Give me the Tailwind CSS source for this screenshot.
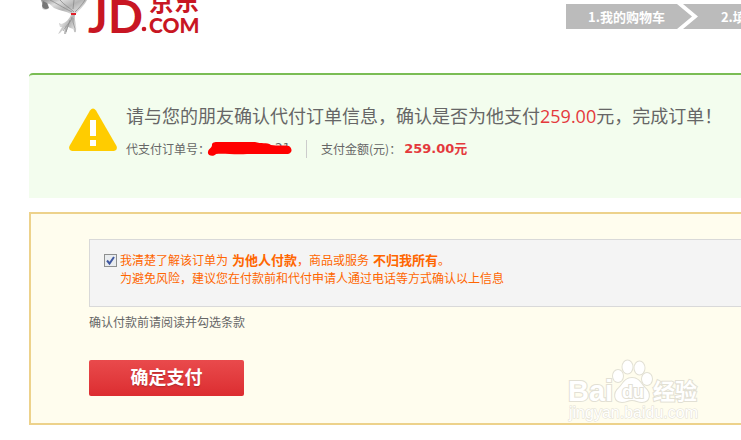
<!DOCTYPE html>
<html lang="zh-CN">
<head>
  <meta charset="UTF-8" />
  <meta name="viewport" content="width=device-width, initial-scale=1.0" />
  <title>确认代付 - 京东</title>
  <script src="https://cdn.jsdelivr.net/npm/@tailwindcss/browser@4"></script>
</head>
<body class="bg-white text-[#666666] text-xs overflow-x-hidden font-['Noto_Sans_CJK_SC',sans-serif]">
  <header class="flex items-start justify-between h-[73px] pl-10">
    <a href="#" aria-label="京东 JD.COM">
      <svg class="block" width="164" height="36" viewBox="40 0 164 36">
        <defs>
          <linearGradient id="silver" x1="0" y1="0" x2="1" y2="0.6">
            <stop offset="0" stop-color="#8f8f8f" />
            <stop offset="0.35" stop-color="#dcdcdc" />
            <stop offset="0.65" stop-color="#b4b4b4" />
            <stop offset="1" stop-color="#e2e2e2" />
          </linearGradient>
        </defs>
        <!-- dog -->
        <path d="M41 0 L87 0 C85 5 79 10 76 14 L71 14 C66 11 60 11 54 8 C51 6 50 3 48 4 C49 7 49 9 46 10 C43 10 41 8 43 6 Z" fill="url(#silver)" />
        <path d="M42 6 C43 9 46 10 49 8 L47 3 L43 1 Z" fill="#777" />
        <path d="M50 0 C56 3 62 7 72 12 M60 0 C64 5 70 8 74 12 M74 0 L73 9 M85 0 C82 5 78 9 75 12" fill="none" stroke="#8a8a8a" stroke-width="0.8" />
        <path d="M71 13 L76 13 L76 15 L71 15 Z" fill="#e0202a" />
        <path d="M71 15 L75 15 C74 20 77 24 76 31 L75 33 L73 29 L68 27 L66 34 L64 34 L65 27 L60 33 L58 34 L62 27 L60 27 L59 23 L61 24 C66 23 69 19 71 15 Z" fill="url(#silver)" />
        <path d="M72 17 C71 23 66 25 63 31 M73 18 C72 24 76 27 75 32 M70 20 L66 32" fill="none" stroke="#888" stroke-width="0.7" />
        <!-- wordmark -->
        <g fill="#c81623">
          <text x="88" y="33" font-family="Lato" font-size="46" font-weight="700">J</text>
          <text x="108" y="33" font-family="Lato" font-size="46" font-weight="700">D</text>
          <circle cx="144" cy="29" r="2.3" />
          <text x="149" y="33" font-family="Lato" font-size="21" font-weight="900">COM</text>
          <text x="149" y="11" font-family="Noto Sans CJK SC" font-size="25" font-weight="700">京东</text>
        </g>
      </svg>
    </a>
    <ol class="flex items-center h-[25px] w-[175px] mt-1 bg-[#bbbbbb] text-white text-[13px] font-bold whitespace-nowrap overflow-hidden">
      <li class="shrink-0 pl-[22px]">1.我的购物车</li>
      <li class="shrink-0 pl-3">
        <svg class="block" width="24" height="25" viewBox="0 0 24 25">
          <path d="M0 0 H6 L21 12.500 L6 25 H0 L15 12.500 Z" fill="#fff" />
        </svg>
      </li>
      <li class="shrink-0 pl-5">2.填写核对订单信息</li>
    </ol>
  </header>

  <main class="ml-[29px]">
    <section class="flex h-[125px] pl-10 border-t-2 border-[#7abd54] rounded-tl-sm bg-[#f3fdee]">
      <svg class="shrink-0 mt-[33px]" width="48" height="43" viewBox="0 0 48 43">
        <path d="M21 2.500 Q24 -1.500 27 2.500 L47.500 38 Q49 42 45 43 H3 Q-1 42 0.500 38 Z" fill="#ffcc00" />
        <path d="M21 12 H27 V28 H21 Z M21 32 H27 V38 H21 Z" fill="#fff" />
      </svg>
      <div class="pl-[9px] pt-6 whitespace-nowrap">
        <h1 class="text-lg leading-[32px]">请与您的朋友确认代付订单信息，确认是否为他支付<span class="text-[#e4393c] font-['Open_Sans','Noto_Sans_CJK_SC',sans-serif]">259.00</span>元，完成订单！</h1>
        <div class="flex items-center h-[34px]">
          <span>代支付订单号：</span>
          <svg class="-ml-[3px]" width="86" height="18" viewBox="0 0 86 18">
            <text x="68" y="12" font-family="DejaVu Sans" font-size="12" fill="#666">21</text>
            <path d="M5 5 C5 2 8 2 11 2 L48 2 C54 4 60 2 64 5 C70 6 78 5 82 6 C86 9 85 13 81 14 L40 14 C28 15 16 13 9 14 C7 17 0 16 1 12 C1 9 5 8 5 5 Z" fill="#f00" />
          </svg>
          <span class="ml-[13px] pl-[14px] h-[18px] leading-[18px] border-l border-[#cccccc]">支付金额(元)：</span>
          <strong class="ml-[3px] text-[13px] text-[#e4393c] font-['DejaVu_Sans','Noto_Sans_CJK_SC',sans-serif]">259.00元</strong>
        </div>
      </div>
    </section>

    <form class="relative mt-[14px] pl-[58px] pt-[25px] pb-[27px] border-2 border-r-0 border-[#edd28b] bg-[#fffdee]">
      <div class="flex h-[68px] pl-[14px] pt-[11px] border border-r-0 border-[#d9d9d9] bg-[#f4f4f4] text-[#ff6600]">
        <span class="grid w-[13px] h-[13px] mt-[3px] mr-[3px]">
          <input type="checkbox" id="agree" checked class="peer appearance-none col-start-1 row-start-1 w-[13px] h-[13px] border border-[#8e8f8f] bg-[#e9ecef]">
          <svg class="col-start-1 row-start-1 pointer-events-none invisible peer-checked:visible" width="13" height="13" viewBox="0 0 13 13">
            <path d="M3 6.500 L5.500 9.500 L10 3" fill="none" stroke="#4058a0" stroke-width="2" />
          </svg>
        </span>
        <label for="agree" class="leading-[18px] whitespace-nowrap">
          我清楚了解该订单为<strong class="ml-1 text-[13px]">为他人付款</strong>，商品或服务<strong class="ml-1 text-[13px]">不归我所有</strong>。<br>
          为避免风险，建议您在付款前和代付申请人通过电话等方式确认以上信息
        </label>
      </div>
      <p class="mt-[6px] leading-[18px]">确认付款前请阅读并勾选条款</p>
      <button type="submit" class="block w-[155px] h-9 mt-[29px] pb-1 rounded-xs bg-linear-to-b from-[#e94a4c] to-[#dc2c30] text-white text-lg font-bold text-shadow-sm cursor-pointer">确定支付</button>

      <!-- watermark -->
      <svg class="absolute right-[31px] bottom-0 pointer-events-none" width="150" height="70" viewBox="560 353 150 70">
        <g fill="#ffffff" stroke="#e2e0d4" stroke-width="2" paint-order="stroke">
          <text x="568" y="401" font-family="Liberation Sans" font-size="29" font-weight="700">Bai</text>
          <ellipse cx="618" cy="376" rx="5" ry="6" />
          <ellipse cx="627.500" cy="367" rx="5" ry="6.500" />
          <ellipse cx="639.500" cy="368" rx="5" ry="6.500" />
          <ellipse cx="647" cy="379" rx="5" ry="6" />
          <path d="M632 378 C639 378 641 384 645 388 C651 393 650 402 642 402 C638 402 636 400 632 400 C628 400 626 402 622 402 C614 402 613 393 619 388 C623 384 625 378 632 378 Z" />
          <text x="622" y="398" font-family="Liberation Sans" font-size="18" font-weight="700">du</text>
          <text x="653" y="399" font-family="Noto Sans CJK SC" font-size="22" font-weight="700">经验</text>
          <text x="569" y="418" font-family="Liberation Sans" font-size="16" stroke-width="1">jingyan.baidu.com</text>
        </g>
      </svg>
    </form>
  </main>
</body>
</html>
